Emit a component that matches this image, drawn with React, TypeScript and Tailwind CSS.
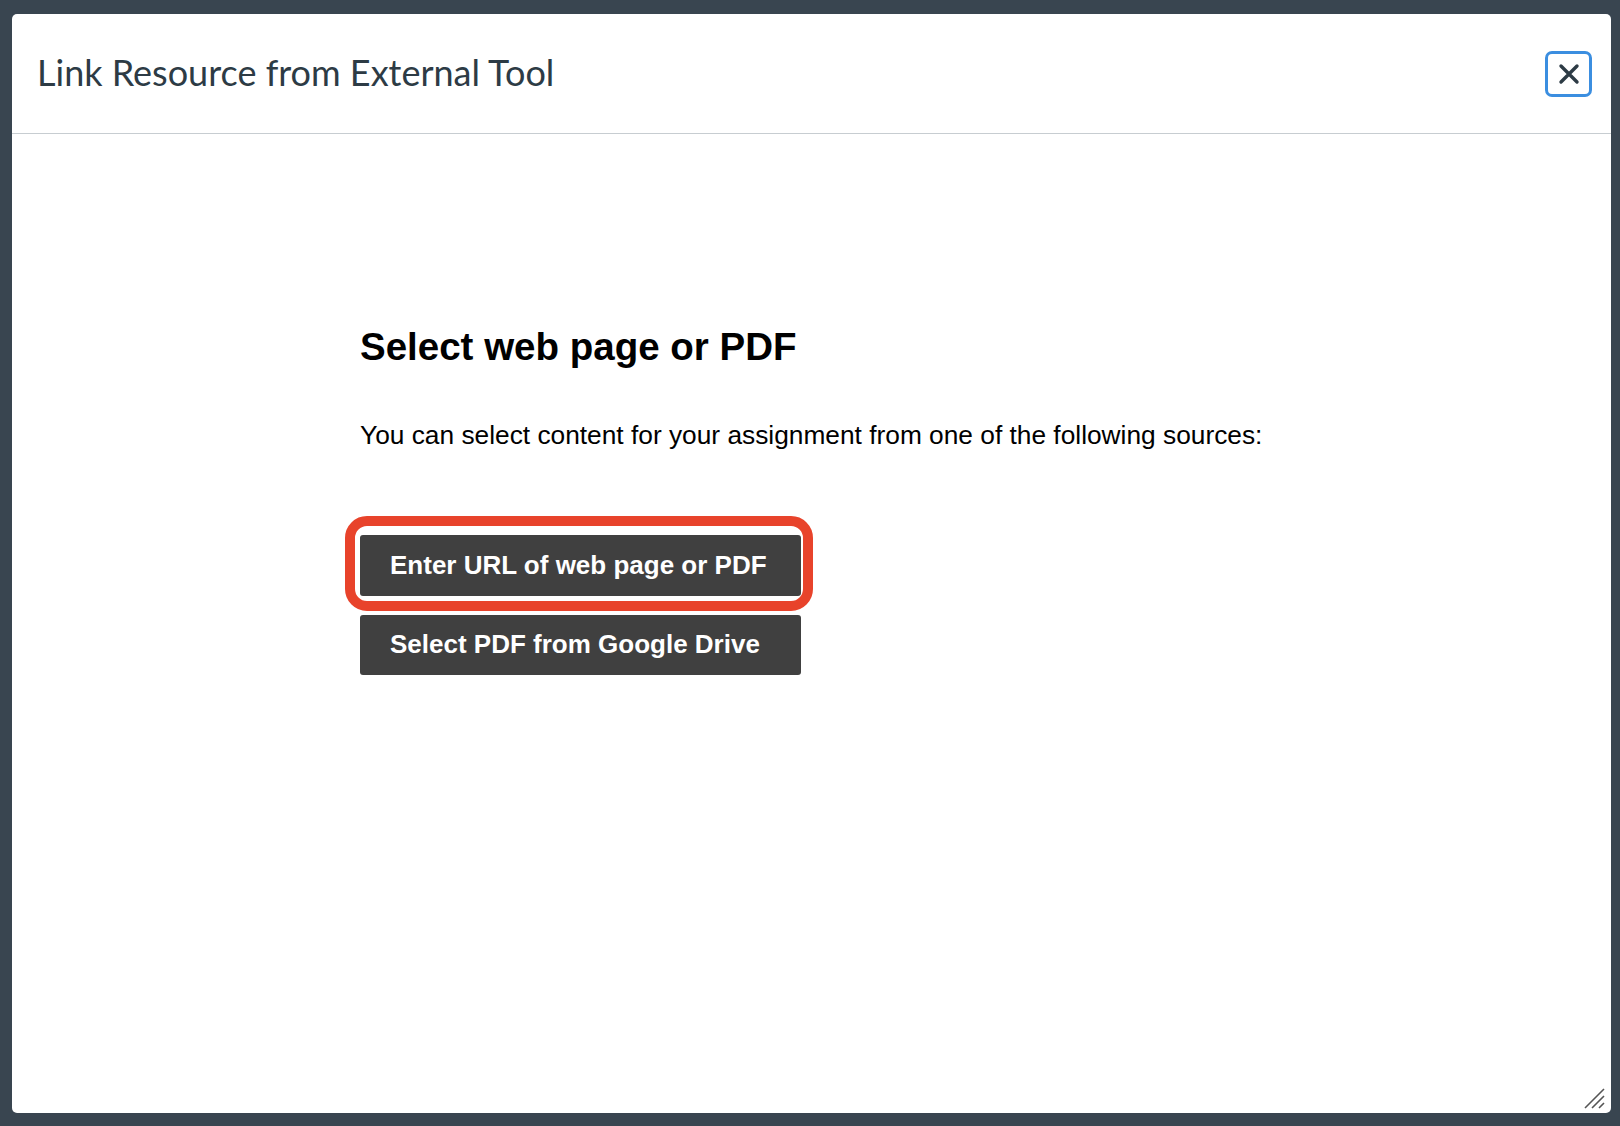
export default function App() {
  return (
    <div className="w-[1620px] h-[1126px] bg-[#394550] pt-[14px] pl-[12px] pr-[9px] pb-[13px]">
      <div className="relative flex h-full w-full flex-col rounded-[5px] bg-white">
        {/* Header */}
        <div className="flex h-[120px] shrink-0 items-center justify-between border-b border-[#c7cdd1] pl-[25px] pr-[19px]">
          <h1 className="mb-[4px] text-[36px] leading-none text-[#2d3b45] font-['Lato','Noto_Sans',sans-serif]">
            Link Resource from External Tool
          </h1>
          <button className="flex h-[46px] w-[47px] items-center justify-center rounded-[7px] border-[3px] border-[#3b8ee0] bg-white">
            <svg width="22" height="22" viewBox="0 0 22 22">
              <path d="M3 3 L19 19 M19 3 L3 19" stroke="#2d3b45" strokeWidth="3.4" strokeLinecap="round" />
            </svg>
          </button>
        </div>

        {/* Body */}
        <div className="flex flex-col pl-[348px] pt-[190px] font-['Liberation_Sans','Helvetica',Arial,sans-serif] text-black">
          <h2 className="text-[38.5px] font-bold leading-[1.2]">Select web page or PDF</h2>
          <p className="mt-[50px] text-[26.3px] leading-[1.2]">
            You can select content for your assignment from one of the following sources:
          </p>
          <div className="mt-[83px] flex flex-col gap-[19px]">
            <div className="relative w-[441px]">
              <span className="pointer-events-none absolute -left-[15px] -right-[12px] -top-[19px] -bottom-[15px] rounded-[22px] border-[10px] border-[#e8432b]" />
              <button className="h-[61px] w-[441px] rounded-[3px] bg-[#404040] px-[30px] text-left text-[26px] font-bold text-white">
                Enter URL of web page or PDF
              </button>
            </div>
            <button className="h-[60px] w-[441px] rounded-[3px] bg-[#404040] px-[30px] text-left text-[26px] font-bold text-white">
              Select PDF from Google Drive
            </button>
          </div>
        </div>

        {/* Resize handle */}
        <svg className="absolute bottom-[4px] right-[6px]" width="22" height="22" viewBox="0 0 22 22">
          <path d="M2 21 L21 2 M9 21 L21 9 M16 21 L21 16" stroke="#555" strokeWidth="1.6" />
        </svg>
      </div>
    </div>
  );
}
